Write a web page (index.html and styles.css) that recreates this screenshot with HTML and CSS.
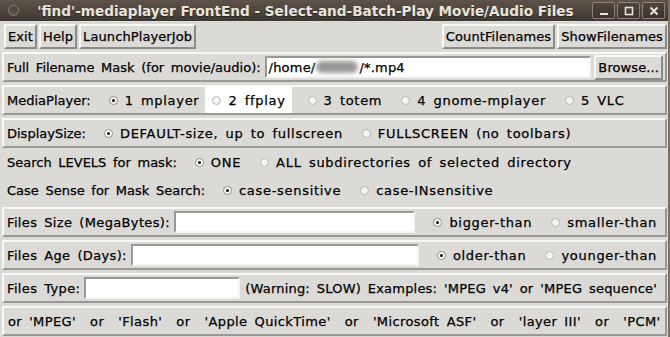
FILE: index.html
```html
<!DOCTYPE html>
<html>
<head>
<meta charset="utf-8">
<link rel="stylesheet" href="styles.css">
</head>
<body>
<div class="window">
  <div class="titlebar">
    <span class="menu-dot"></span>
    <span class="title">'find'-mediaplayer FrontEnd - Select-and-Batch-Play Movie/Audio Files</span>
    <div class="wm-buttons">
      <span class="wm-btn"><svg width="10" height="10" viewBox="0 0 10 10"><rect x="1" y="7" width="8" height="2" fill="#e6e2dc"/></svg></span>
      <span class="wm-btn"><svg width="10" height="10" viewBox="0 0 10 10"><rect x="1.5" y="1.5" width="7" height="7" fill="none" stroke="#e6e2dc" stroke-width="1.6"/></svg></span>
      <span class="wm-btn"><svg width="10" height="10" viewBox="0 0 10 10"><path d="M1.5 1.5 L8.5 8.5 M8.5 1.5 L1.5 8.5" stroke="#e6e2dc" stroke-width="2"/></svg></span>
    </div>
  </div>
  <div class="content">
    <div class="toolbar">
      <div class="group">
        <span class="btn">Exit</span>
        <span class="btn">Help</span>
        <span class="btn">LaunchPlayerJob</span>
      </div>
      <div class="group">
        <span class="btn">CountFilenames</span>
        <span class="btn">ShowFilenames</span>
      </div>
    </div>

    <div class="row framed">
      <span class="label">Full Filename Mask (for movie/audio):</span>
      <span class="entry grow"><span>/home/</span><span class="blur"></span><span>/*.mp4</span></span>
      <span class="btn browse">Browse...</span>
    </div>

    <div class="row framed">
      <span class="label">MediaPlayer:</span>
      <span class="radio sel"><i></i>1 mplayer</span>
      <span class="radio active"><i></i>2 ffplay</span>
      <span class="radio"><i></i>3 totem</span>
      <span class="radio"><i></i>4 gnome-mplayer</span>
      <span class="radio"><i></i>5 VLC</span>
    </div>

    <div class="row framed">
      <span class="label">DisplaySize:</span>
      <span class="radio sel"><i></i>DEFAULT-size, up to fullscreen</span>
      <span class="radio"><i></i>FULLSCREEN (no toolbars)</span>
    </div>

    <div class="row flat">
      <span class="label">Search LEVELS for mask:</span>
      <span class="radio sel"><i></i>ONE</span>
      <span class="radio"><i></i>ALL subdirectories of selected directory</span>
    </div>

    <div class="row flat">
      <span class="label">Case Sense for Mask Search:</span>
      <span class="radio sel"><i></i>case-sensitive</span>
      <span class="radio"><i></i>case-INsensitive</span>
    </div>

    <div class="row framed">
      <span class="label wide">Files Size (MegaBytes):</span>
      <span class="entry grow"></span>
      <span class="radio sel"><i></i>bigger-than</span>
      <span class="radio"><i></i>smaller-than</span>
    </div>

    <div class="row framed">
      <span class="label wide">Files Age (Days):</span>
      <span class="entry grow"></span>
      <span class="radio sel"><i></i>older-than</span>
      <span class="radio"><i></i>younger-than</span>
    </div>

    <div class="row framed">
      <span class="label wide">Files Type:</span>
      <span class="entry type"></span>
      <span class="text tight">(Warning: SLOW) Examples: 'MPEG v4' or 'MPEG sequence'</span>
    </div>

    <div class="row framed">
      <span class="text pre">or 'MPEG'  or  'Flash'  or  'Apple QuickTime'  or  'Microsoft ASF'  or  'layer III'  or  'PCM'</span>
    </div>
  </div>
</div>
</body>
</html>
```

FILE: styles.css
```css
* { box-sizing: border-box; }

html, body {
  margin: 0;
  padding: 0;
  width: 670px;
  height: 337px;
  overflow: hidden;
  background: #dcdad7;
}

.window {
  width: 670px;
  height: 337px;
  display: flex;
  flex-direction: column;
  background: #dcdad7;
  border-right: 2px solid #7d6f63;
  font-family: "DejaVu Sans", sans-serif;
  font-size: 13px;
  letter-spacing: 0.2px;
  word-spacing: 2.5px;
  color: #000;
}

.titlebar {
  height: 21px;
  flex: none;
  display: flex;
  align-items: center;
  background: linear-gradient(#5e534a, #3f3731);
  padding: 0 3px 0 8px;
}

.menu-dot {
  width: 11px;
  height: 11px;
  border-radius: 50%;
  border: 1px solid #8a8078;
  background: linear-gradient(#4a423c, #5a514a);
  flex: none;
}

.title {
  flex: 1;
  text-align: center;
  color: #e8e4dc;
  font-weight: bold;
  font-size: 13.6px;
  letter-spacing: 0;
  word-spacing: 0;
  text-shadow: 0 1px 0 #2a2420;
  white-space: nowrap;
}

.wm-buttons {
  display: flex;
  gap: 2px;
}

.wm-btn {
  width: 23px;
  height: 17px;
  border: 1px solid #8d8177;
  border-radius: 2px;
  background: linear-gradient(#4e4540, #3a332e);
  display: flex;
  align-items: center;
  justify-content: center;
}

.content {
  flex: 1;
  display: flex;
  flex-direction: column;
  padding: 0 1px 0 2px;
  -webkit-text-stroke: 0.25px #000;
}

.toolbar {
  display: flex;
  justify-content: space-between;
  padding: 3px 0 0 2px;
  height: 28px;
  flex: none;
}

.group {
  display: flex;
  gap: 2px;
}

.btn {
  display: flex;
  align-items: center;
  height: 25px;
  padding: 0 2px;
  border: 2px solid;
  border-color: #f8f8f6 #8c8a86 #8c8a86 #f8f8f6;
  background: #dcdad7;
  white-space: nowrap;
  letter-spacing: 0.1px;
}

.row {
  display: flex;
  align-items: center;
  white-space: nowrap;
  flex: none;
}

.framed {
  height: 30px;
  margin-top: 3px;
  padding: 0 2px;
  border: 2px solid;
  border-color: #f8f8f6 #9a9894 #9a9894 #f8f8f6;
}

.flat {
  height: 28px;
  padding: 0 4px;
}

.label {
  padding: 0 1px;
  letter-spacing: 0;
}

.label.wide {
  letter-spacing: 0.35px;
}

.text {
  padding: 0 2px;
  letter-spacing: 0.4px;
}

.text.tight {
  letter-spacing: 0.2px;
}

.pre {
  white-space: pre;
}

.entry {
  height: 22px;
  background: #fff;
  border: 2px solid;
  border-color: #9a9894 #f4f4f2 #f4f4f2 #9a9894;
  display: flex;
  align-items: center;
  padding: 0 2px;
  margin: 0 3px 0 3px;
  word-spacing: 0;
}

.grow { flex: 1; }

.type {
  width: 156px;
  flex: none;
}

.blur {
  display: inline-block;
  width: 42px;
  height: 12px;
  border-radius: 6px;
  background: #9a9896;
  filter: blur(2px);
  margin: 0 1px;
}

.radio {
  display: flex;
  align-items: center;
  height: 26px;
  padding: 0 6px 0 7px;
  letter-spacing: 0.7px;
}

.radio + .radio {
  margin-left: 6px;
}

.label + .radio {
  margin-left: 10px;
}

.entry + .radio {
  margin-left: 8px;
}

.radio i {
  width: 9px;
  height: 9px;
  border-radius: 50%;
  border: 1px solid #b8b6b2;
  background: #f4f4f2;
  margin-right: 7px;
  display: flex;
  align-items: center;
  justify-content: center;
  flex: none;
}

.radio.sel i {
  border-color: #8c8a86;
  background: #fff;
}

.radio.sel i::after {
  content: "";
  width: 3px;
  height: 3px;
  border-radius: 50%;
  background: #000;
}

.radio.active {
  background: #fff;
}

.radio.active + .radio {
  margin-left: 9px;
}

.radio.sel + .radio.active {
  margin-left: 0;
}
```
